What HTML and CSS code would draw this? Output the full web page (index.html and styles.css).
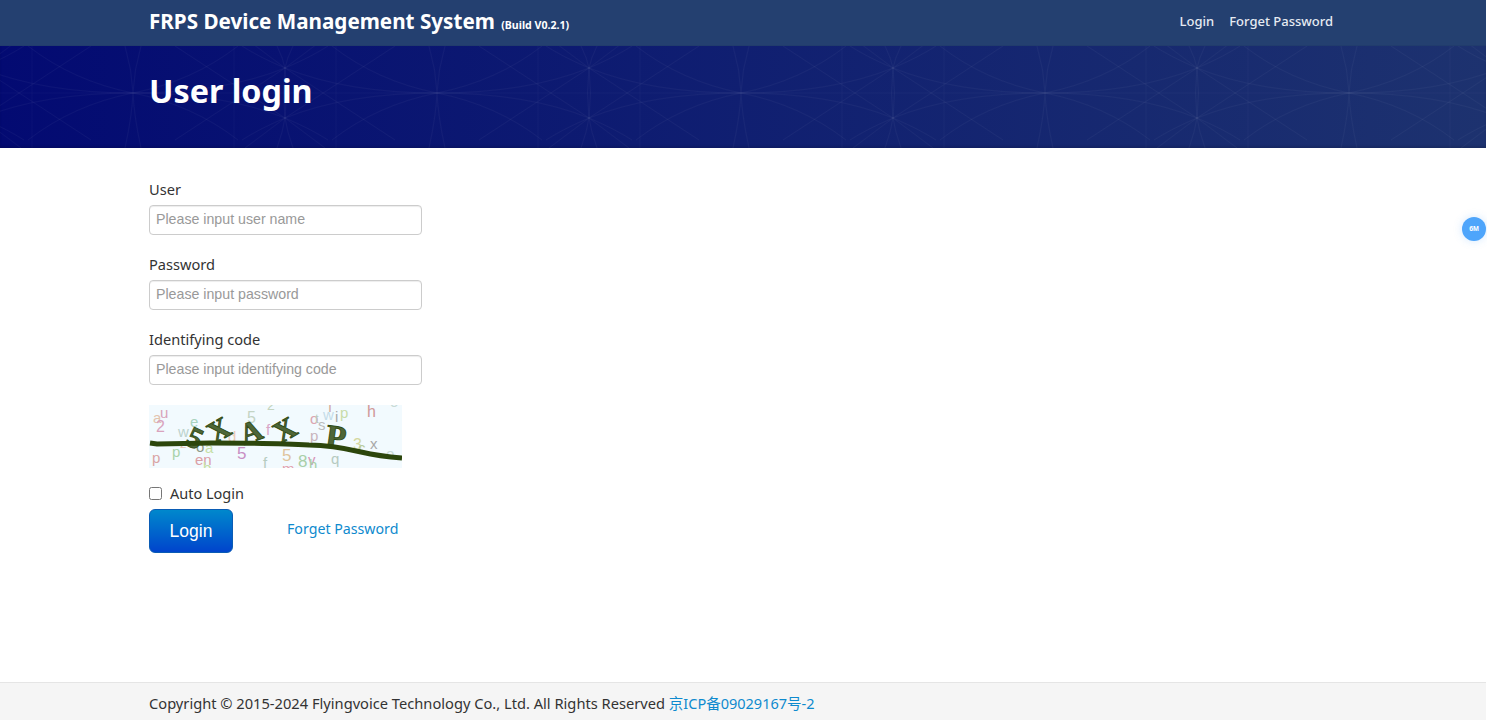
FILE: index.html
```html
<!DOCTYPE html>
<html lang="en">
<head>
<meta charset="utf-8">
<title>FRPS Device Management System</title>
<link rel="stylesheet" href="styles.css">
</head>
<body>
<div class="page">
  <header class="hero">
    <svg class="pattern" width="1486" height="102" viewBox="0 0 1486 102" fill="none" aria-hidden="true">
      <defs>
        <g id="quad">
          <path d="M0 47 Q60 35 105 0"/>
          <path d="M0 47 Q90 47 152 22 Q178 11 195 0"/>
          <path d="M42 0 L152 72 L192 102"/>
        </g>
        <pattern id="weave" width="304" height="102" patternUnits="userSpaceOnUse" patternTransform="translate(133 0)">
          <g stroke="#ffffff" stroke-opacity="0.036">
            <use href="#quad"/>
            <use href="#quad" transform="translate(0 94) scale(1 -1)"/>
            <use href="#quad" transform="translate(304 0) scale(-1 1)"/>
            <use href="#quad" transform="translate(304 94) scale(-1 -1)"/>
            <path d="M8 0 Q1 24 0 47 Q1 70 8 102"/>
            <path d="M296 0 Q303 24 304 47 Q303 70 296 102"/>
            <path d="M144 0 Q150 12 152 22 Q155 47 152 72 Q150 85 144 102"/>
            <path d="M160 0 Q154 12 152 22 Q149 47 152 72 Q154 85 160 102"/>
            <path d="M101 0 V102 M203 0 V102" stroke-opacity="0.018"/>
            <path d="M0 47 H304" stroke-opacity="0.022"/>
          </g>
        </pattern>
      </defs>
      <rect width="1486" height="102" fill="url(#weave)"/>
    </svg>
    <nav class="topbar">
      <div class="brand">FRPS Device Management System <small class="build">(Build V0.2.1)</small></div>
      <div class="nav-links"><a href="#">Login</a><a href="#">Forget Password</a></div>
    </nav>
    <h1 class="title">User login</h1>
  </header>

  <main class="content">
    <form class="login">
      <div class="field">
        <label for="user">User</label>
        <input id="user" type="text" placeholder="Please input user name">
      </div>
      <div class="field">
        <label for="pass">Password</label>
        <input id="pass" type="password" placeholder="Please input password">
      </div>
      <div class="field">
        <label for="code">Identifying code</label>
        <input id="code" type="text" placeholder="Please input identifying code">
      </div>
      <svg class="captcha" width="253" height="63" viewBox="0 0 253 63" role="img" aria-label="captcha">
        <rect width="253" height="63" fill="#f2fafe"/>
        <g font-family="Liberation Sans, sans-serif" font-size="15">
          <text x="4" y="18" fill="#e3c4ae">a</text>
          <text x="11" y="13" fill="#d8a3bb">u</text>
          <text x="7" y="27" fill="#d9a3bd" font-size="16">2</text>
          <text x="41" y="22" fill="#a9d3be">e</text>
          <text x="29" y="32" fill="#bcd2cc">w</text>
          <text x="98" y="18" fill="#c4d4c4" font-size="16">5</text>
          <text x="118" y="5" fill="#c4d4c0" font-size="14">2</text>
          <text x="79" y="37" fill="#eccab4">d</text>
          <text x="117" y="30" fill="#d8a6c8">f</text>
          <text x="114" y="63" fill="#b6ccc0">f</text>
          <text x="3" y="58" fill="#d9a4a4">p</text>
          <text x="23" y="52" fill="#a9d3ab">p</text>
          <text x="31" y="43" fill="#e8c4b0" font-size="13">z</text>
          <text x="47" y="47" fill="#8d9a88">o</text>
          <text x="56" y="48" fill="#c6dfa6">a</text>
          <text x="46" y="60" fill="#dba0a6">en</text>
          <text x="54" y="68" fill="#c6dfa6">b</text>
          <text x="88" y="54" fill="#c88fc4" font-size="17">5</text>
          <text x="133" y="56" fill="#e0c49c" font-size="17">5</text>
          <text x="133" y="69" fill="#e3a0ae">m</text>
          <text x="149" y="62" fill="#a9cfa8" font-size="17">8</text>
          <text x="159" y="60" fill="#d795b8">v</text>
          <text x="160" y="65" fill="#a9cfa8">h</text>
          <text x="182" y="59" fill="#b6cac0">q</text>
          <text x="161" y="19" fill="#dca5b0">o</text>
          <text x="166" y="18" fill="#b8ccc0" font-size="13">t</text>
          <text x="169" y="25" fill="#bcbcbc">s</text>
          <text x="179" y="7" fill="#d0a89c">f</text>
          <text x="174" y="15" fill="#c4dce8">w</text>
          <text x="186" y="17" fill="#a8a8a8">i</text>
          <text x="191" y="13" fill="#c8dca8">p</text>
          <text x="161" y="36" fill="#c8b4bc">p</text>
          <text x="218" y="12" fill="#cf9898" font-size="16">h</text>
          <text x="241" y="2" fill="#c8dad6">o</text>
          <text x="237" y="54" fill="#c8dad6">o</text>
          <text x="204" y="45" fill="#d4d8a0" font-size="16">3</text>
          <text x="209" y="48" fill="#b8cca0">c</text>
          <text x="221" y="44" fill="#a8a8a8">x</text>
        </g>
        <g font-family="Liberation Serif, serif" font-weight="700" fill="#4e6638" stroke="#2f4a12" stroke-width="0.9" text-anchor="middle">
          <text font-size="30" transform="translate(46 33) rotate(25) translate(0 10)">5</text>
          <text font-size="30" transform="translate(70 25) rotate(-30) translate(0 10)">X</text>
          <text font-size="30" transform="translate(102 27) rotate(-20) translate(0 10)">A</text>
          <text font-size="30" transform="translate(136 25) rotate(-30) translate(0 10)">X</text>
          <text font-size="33" transform="translate(187 32) rotate(8) translate(0 11)">P</text>
        </g>
        <path d="M1 38 L8 39 L62 38 C100 38 130 38 160 40 C180 40 195 43 212 47 C225 50 240 52 253 53" fill="none" stroke="#2c460c" stroke-width="5"/>
      </svg>
      <label class="auto"><input type="checkbox"> Auto Login</label>
      <div class="actions">
        <button type="button" class="btn">Login</button>
        <a class="forgot" href="#">Forget Password</a>
      </div>
    </form>
  </main>

  <footer class="footer">
    <div class="footer-inner">Copyright © 2015-2024 Flyingvoice Technology Co., Ltd. All Rights Reserved <a href="#">京ICP备09029167号-2</a></div>
  </footer>
  <div class="badge">6M</div>
</div>
</body>
</html>
```
FILE: styles.css
```css
* { box-sizing: border-box; }
html, body { margin: 0; height: 720px; overflow: hidden; background: #fff; }
body { font-family: "Noto Sans", "Noto Sans CJK SC", sans-serif; font-size: 14.5px; color: #333; }
.page { position: relative; height: 720px; width: 1486px; display: flex; flex-direction: column; }
a { text-decoration: none; }

.hero { position: relative; height: 148px; background: linear-gradient(90deg, #030a72 0%, #101f71 50%, #1d326f 100%); box-shadow: inset 0 -2px 2px rgba(0,0,0,.12); }
.pattern { position: absolute; left: 0; top: 46px; }
.topbar { position: relative; height: 46px; padding: 0 153px 0 149px; display: flex; justify-content: space-between; align-items: center; background: #244070; border-bottom: 1px solid #213c6c; }
.brand { color: #fff; font-size: 20.65px; font-weight: 700; line-height: 40px; }
.build { font-size: 10.6px; margin-left: 1px; }
.nav-links { display: flex; gap: 15px; margin-top: -3px; }
.nav-links a { color: #e6ebf2; font-size: 13px; font-weight: 500; }
.title { position: relative; margin: 0; padding: 21px 0 0 149px; color: #fff; font-size: 32.3px; font-weight: 700; line-height: 46px; }

.content { flex: 1; padding: 30px 0 0 149px; }
.login { width: 273px; }
.field { margin-bottom: 18px; }
.field label { display: block; height: 27px; font-size: 14.6px; color: #333; line-height: 22px; }
.field input { display: block; width: 273px; height: 30px; padding: 0 6px 2px; border: 1px solid #ccc; border-radius: 4px; font-family: "Liberation Sans", sans-serif; font-size: 14.2px; box-shadow: inset 0 1px 1px rgba(0,0,0,.075); }
.field input::placeholder { color: #999; opacity: 1; }
.captcha { display: block; margin-top: 20px; }
.auto { display: flex; align-items: center; gap: 8px; margin-top: 14px; height: 22px; font-size: 14.5px; color: #333; }
.auto input { margin: 0; width: 13px; height: 13px; }
.actions { display: flex; align-items: center; margin-top: 5px; }
.btn { width: 84px; height: 44px; border: 1px solid #0a5cb5; border-radius: 6px; background: linear-gradient(180deg, #0088cc, #0044cc); color: #fff; font-family: "Liberation Sans", sans-serif; font-size: 17.5px; }
.forgot { margin: -5px 0 0 54px; color: #0e8ace; font-size: 14.2px; }

.footer { height: 38px; background: #f5f5f5; border-top: 1px solid #e5e5e5; }
.footer-inner { padding-left: 149px; line-height: 40px; font-size: 14.67px; color: #333; }
.footer-inner a { color: #0e8ace; font-size: 14.5px; }

.badge { position: absolute; left: 1462px; top: 217px; width: 24px; height: 24px; border-radius: 50%; background: #4ea5fb; color: #fff; font-family: "Liberation Sans", sans-serif; font-size: 7px; font-weight: 700; text-align: center; line-height: 24px; box-shadow: 0 0 8px rgba(78,165,251,.25); }
```
